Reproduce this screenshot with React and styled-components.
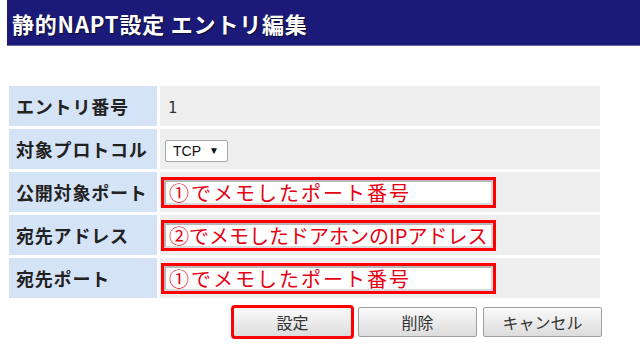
import React from "react";
import styled, { createGlobalStyle } from "styled-components";

const GlobalStyle = createGlobalStyle`
  html, body {
    margin: 0;
    padding: 0;
    background: #fff;
    font-family: "Noto Sans CJK JP", "Noto Sans", sans-serif;
  }
`;

const Page = styled.div`
  width: 640px;
  height: 360px;
  overflow: hidden;
  padding-left: 6px;
  box-sizing: border-box;
`;

const Header = styled.div`
  margin-left: 1px;
  height: 45px;
  background: #1b1a78;
  border-bottom: 1px solid #6a6aa8;
  display: flex;
  align-items: center;
  padding-left: 5px;

  h1 {
    margin: 0;
    color: #fff;
    font-size: 22px;
    font-weight: 700;
    letter-spacing: 0.8px;
    text-shadow: 1px 1px 1px rgba(0, 0, 0, 0.6);
  }
`;

const Form = styled.table`
  margin-top: 37px;
  border-collapse: separate;
  border-spacing: 3px;
  width: 597px;
`;

const Label = styled.th`
  width: 148px;
  min-width: 148px;
  height: 40px;
  padding: 0 0 0 7px;
  box-sizing: border-box;
  background: #d5e3f6;
  color: #222;
  text-align: left;
  font-size: 18px;
  font-weight: 700;
  letter-spacing: 0.8px;
  white-space: nowrap;
`;

const Value = styled.td`
  height: 40px;
  padding: 0 0 0 5px;
  box-sizing: border-box;
  background: #eeeeee;
  color: #333;
  font-size: 16px;
`;

const Plain = styled.span`
  padding-left: 3px;
  font-family: "DejaVu Sans Mono", monospace;
  font-size: 15px;
`;

const Select = styled.div`
  display: inline-flex;
  align-items: center;
  gap: 8px;
  width: 63px;
  height: 22px;
  box-sizing: border-box;
  padding-left: 7px;
  background: #fff;
  border: 1px solid #a9a9a9;
  border-radius: 2px;
  font-family: "Liberation Sans", sans-serif;
  font-size: 14px;
  color: #111;
  vertical-align: middle;

  span.arrow {
    font-size: 10px;
  }
`;

const Marked = styled.div`
  margin-left: -4px;
  width: 335px;
  height: 31px;
  box-sizing: border-box;
  border: 3px solid #f00;
  display: flex;
`;

const Input = styled.div`
  flex: 1;
  box-sizing: border-box;
  border: 2px solid #b8b8b8;
  border-right-color: #d8d8d8;
  border-bottom-color: #d8d8d8;
  background: #fff;
  color: #e60012;
  font-size: 20px;
  line-height: 21px;
  padding-left: 3px;
  white-space: nowrap;
  letter-spacing: ${(p) => p.$spacing}px;
`;

const Buttons = styled.div`
  display: flex;
  justify-content: flex-end;
  gap: 6px;
  width: 596px;
  margin-top: 6px;
`;

const Button = styled.button`
  width: 119px;
  height: 30px;
  padding: 0;
  border: 1px solid #a0a0a0;
  border-radius: 2px;
  background: linear-gradient(#fafafa, #dcdcdc);
  color: #333;
  font-family: "Noto Sans CJK JP", sans-serif;
  font-size: 16px;
  outline: ${(p) => (p.$marked ? "3px solid #f00" : "none")};
  outline-offset: -1px;
`;

const rows = [
  { label: "エントリ番号", kind: "plain", value: "1" },
  { label: "対象プロトコル", kind: "select", value: "TCP" },
  { label: "公開対象ポート", kind: "input", value: "①でメモしたポート番号", spacing: 2 },
  { label: "宛先アドレス", kind: "input", value: "②でメモしたドアホンのIPアドレス", spacing: 0 },
  { label: "宛先ポート", kind: "input", value: "①でメモしたポート番号", spacing: 2 },
];

export default function App() {
  return (
    <Page>
      <GlobalStyle />
      <Header>
        <h1>静的NAPT設定 エントリ編集</h1>
      </Header>
      <Form>
        <tbody>
          {rows.map((r) => (
            <tr key={r.label}>
              <Label>{r.label}</Label>
              <Value>
                {r.kind === "plain" && <Plain>{r.value}</Plain>}
                {r.kind === "select" && (
                  <Select>
                    {r.value} <span className="arrow">▼</span>
                  </Select>
                )}
                {r.kind === "input" && (
                  <Marked>
                    <Input $spacing={r.spacing}>{r.value}</Input>
                  </Marked>
                )}
              </Value>
            </tr>
          ))}
        </tbody>
      </Form>
      <Buttons>
        <Button $marked>設定</Button>
        <Button>削除</Button>
        <Button>キャンセル</Button>
      </Buttons>
    </Page>
  );
}
